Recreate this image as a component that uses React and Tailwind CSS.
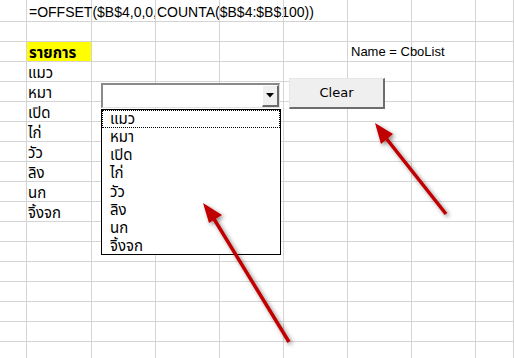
import React from "react";

const colW = ["w-[27px]", "w-[65px]", "w-[64px]", "w-[64px]", "w-[64px]", "w-[64px]", "w-[64px]", "w-[64px]", "flex-1"];
const thai = ["แมว", "หมา", "เปิด", "ไก่", "วัว", "ลิง", "นก", "จิ้งจก"];

function Cell({ w, children, className = "" }) {
  return (
    <div className={`${w} shrink-0 h-full border-r border-b border-[#d4d4d4] relative ${className}`}>
      {children}
    </div>
  );
}

function Row({ h, cells = {} }) {
  return (
    <div className={`flex ${h}`}>
      {colW.map((w, i) => (
        <Cell key={i} w={w} className={cells[i]?.cls || ""}>
          {cells[i]?.content}
        </Cell>
      ))}
    </div>
  );
}

const sheetFont = "font-['Liberation_Sans','Noto_Sans_Thai','Tahoma',sans-serif]";

export default function App() {
  const rows = [];
  rows.push(
    <Row
      key="r1"
      h="h-[22px]"
      cells={{
        1: {
          content: (
            <span className="absolute left-[2px] bottom-[2px] whitespace-nowrap text-[14px] leading-none text-black">
              =OFFSET($B$4,0,0,COUNTA($B$4:$B$100))
            </span>
          ),
        },
      }}
    />
  );
  rows.push(<Row key="r2" h="h-[20px]" />);
  rows.push(
    <Row
      key="r3"
      h="h-[20px]"
      cells={{
        1: {
          cls: "bg-[#ffff00]",
          content: (
            <span className="absolute left-[2px] bottom-[1px] whitespace-nowrap text-[15px] leading-none font-bold text-black">
              รายการ
            </span>
          ),
        },
        6: {
          content: (
            <span className="absolute left-[3px] bottom-[3px] whitespace-nowrap text-[13px] leading-none text-black">
              Name = CboList
            </span>
          ),
        },
      }}
    />
  );
  thai.forEach((t, i) => {
    rows.push(
      <Row
        key={"t" + i}
        h="h-[20px]"
        cells={{
          1: {
            content: (
              <span className="absolute left-[1px] bottom-[1px] whitespace-nowrap text-[15px] leading-none text-black">
                {t}
              </span>
            ),
          },
        }}
      />
    );
  });
  for (let i = 0; i < 8; i++) rows.push(<Row key={"e" + i} h="h-[20px]" />);

  return (
    <div className={`relative w-[514px] h-[358px] overflow-hidden bg-white ${sheetFont}`}>
      <div className="flex flex-col">{rows}</div>

      {/* Combo box */}
      <div className="absolute left-[101px] top-[83px] w-[179px] h-[25px] bg-white border-t-2 border-l-2 border-t-[#8a8a8a] border-l-[#8a8a8a] border-b border-r border-b-[#e0e0e0] border-r-[#e0e0e0] flex justify-end">
        <div className="w-[17px] h-full bg-[#f0f0f0] border-r-2 border-b-2 border-r-[#6a6a6a] border-b-[#6a6a6a] border-l border-t border-l-white border-t-white flex items-center justify-center">
          <svg width="8" height="5" viewBox="0 0 8 5">
            <polygon points="0,0 8,0 4,4.5" fill="#000" />
          </svg>
        </div>
      </div>

      {/* List box */}
      <div className="absolute left-[101px] top-[109px] w-[180px] h-[146px] bg-white border border-black">
        <div className="flex flex-col">
          {thai.map((t, i) =>
            i === 0 ? (
              <div
                key={t}
                className="h-[18px] pl-[7px] text-[15px] leading-[16px] whitespace-nowrap text-black border border-dotted border-black"
              >
                {t}
              </div>
            ) : (
              <div
                key={t}
                className="h-[18.2px] pl-[8px] text-[15px] leading-[17px] whitespace-nowrap text-black"
              >
                {t}
              </div>
            )
          )}
        </div>
      </div>

      {/* Clear button */}
      <div className="absolute left-[289px] top-[78px] w-[96px] h-[31px] bg-[#efefef] border-t border-l border-t-[#e6e6e6] border-l-[#e6e6e6] border-b-2 border-r-2 border-b-[#6d6d6d] border-r-[#6d6d6d] flex items-center justify-center font-['DejaVu_Sans',sans-serif] text-[13px] text-black">
        Clear
      </div>

      {/* Arrows */}
      <svg className="absolute left-0 top-0 pointer-events-none" width="514" height="358">
        <defs>
          <filter id="sh" x="-20%" y="-20%" width="140%" height="140%">
            <feDropShadow dx="2" dy="2" stdDeviation="2" floodColor="#000" floodOpacity="0.45" />
          </filter>
        </defs>
        <g filter="url(#sh)">
          <line x1="289" y1="342" x2="211" y2="214" stroke="#c00000" strokeWidth="3.5" />
          <polygon points="203,203 222,215 209,223" fill="#c00000" />
          <line x1="446" y1="214" x2="382" y2="133" stroke="#c00000" strokeWidth="3.5" />
          <polygon points="375,123 393,134 381,144" fill="#c00000" />
        </g>
      </svg>
    </div>
  );
}
